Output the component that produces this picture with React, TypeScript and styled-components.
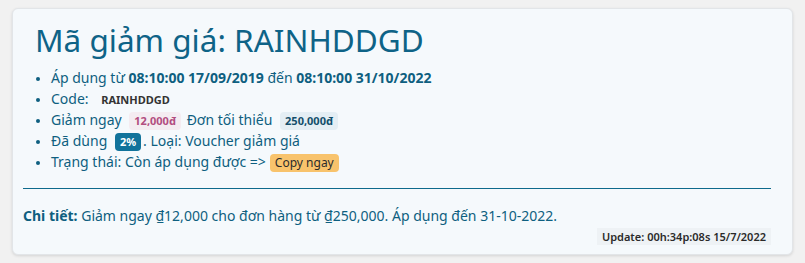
import React from 'react'
import styled, { createGlobalStyle } from 'styled-components'

const GlobalStyle = createGlobalStyle`
  body {
    margin: 0;
    background: #f1f1f1;
    font-family: 'Noto Sans', 'Open Sans', sans-serif;
  }
`

const Card = styled.div`
  margin: 8px 12px 10px 12px;
  padding: 9px 21px 9px 10px;
  background: #f5f9fc;
  border: 1px solid #e2e5e8;
  border-radius: 6px;
  box-shadow: 0 1px 3px rgba(0, 0, 0, 0.12);
  color: #0e5f80;
`

const Head = styled.div`
  padding-left: 12px;
  padding-bottom: 16px;
  border-bottom: 1px solid #0e6a8c;
`

const Title = styled.h1`
  margin: 0 0 6px 0;
  font-size: 31.5px;
  font-weight: 400;
  color: #0e6387;
`

const List = styled.ul`
  margin: 0;
  padding-left: 16px;
  font-size: 14px;
  line-height: 21px;
`

const Item = styled.li`
  &::marker {
    font-size: 12px;
  }
`

const Badge = styled.span<{ $tone: 'pink' | 'blue' | 'solid' | 'plain' }>`
  display: inline-block;
  font-size: 11px;
  font-weight: 700;
  line-height: 18px;
  padding: 0 5px;
  margin: 0 2px 0 4px;
  border-radius: 4px;
  background: ${({ $tone }) =>
    $tone === 'pink' ? '#f4ecf1' : $tone === 'blue' ? '#e4eef4' : $tone === 'solid' ? '#11739b' : 'transparent'};
  color: ${({ $tone }) =>
    $tone === 'pink' ? '#b24d80' : $tone === 'blue' ? '#134e6b' : $tone === 'solid' ? '#ffffff' : '#333'};
`

const CopyButton = styled.button`
  font-family: inherit;
  font-size: 12px;
  line-height: 18px;
  padding: 0 5px;
  margin-left: 4px;
  border: none;
  border-radius: 4px;
  background: #f8c36c;
  color: #2b2b2b;
`

const Detail = styled.p`
  margin: 17px 0 0 0;
  font-size: 14px;
  color: #0e5f80;
`

const Footer = styled.div`
  display: flex;
  justify-content: flex-end;
  margin-top: 3px;
`

const Update = styled.span`
  font-size: 11px;
  font-weight: 600;
  color: #2a2a2a;
  background: #eef2f5;
  padding: 1px 5px;
`

export default function App() {
  return (
    <>
      <GlobalStyle />
      <Card>
        <Head>
          <Title>Mã giảm giá: RAINHDDGD</Title>
          <List>
            <Item>
              Áp dụng từ <b>08:10:00 17/09/2019</b> đến <b>08:10:00 31/10/2022</b>
            </Item>
            <Item>
              Code: <Badge $tone="plain">RAINHDDGD</Badge>
            </Item>
            <Item>
              Giảm ngay <Badge $tone="pink">12,000đ</Badge> Đơn tối thiểu <Badge $tone="blue">250,000đ</Badge>
            </Item>
            <Item>
              Đã dùng <Badge $tone="solid">2%</Badge>. Loại: Voucher giảm giá
            </Item>
            <Item>
              Trạng thái: Còn áp dụng được =&gt;<CopyButton>Copy ngay</CopyButton>
            </Item>
          </List>
        </Head>
        <Detail>
          <b>Chi tiết:</b> Giảm ngay ₫12,000 cho đơn hàng từ ₫250,000. Áp dụng đến 31-10-2022.
        </Detail>
        <Footer>
          <Update>Update: 00h:34p:08s 15/7/2022</Update>
        </Footer>
      </Card>
    </>
  )
}
